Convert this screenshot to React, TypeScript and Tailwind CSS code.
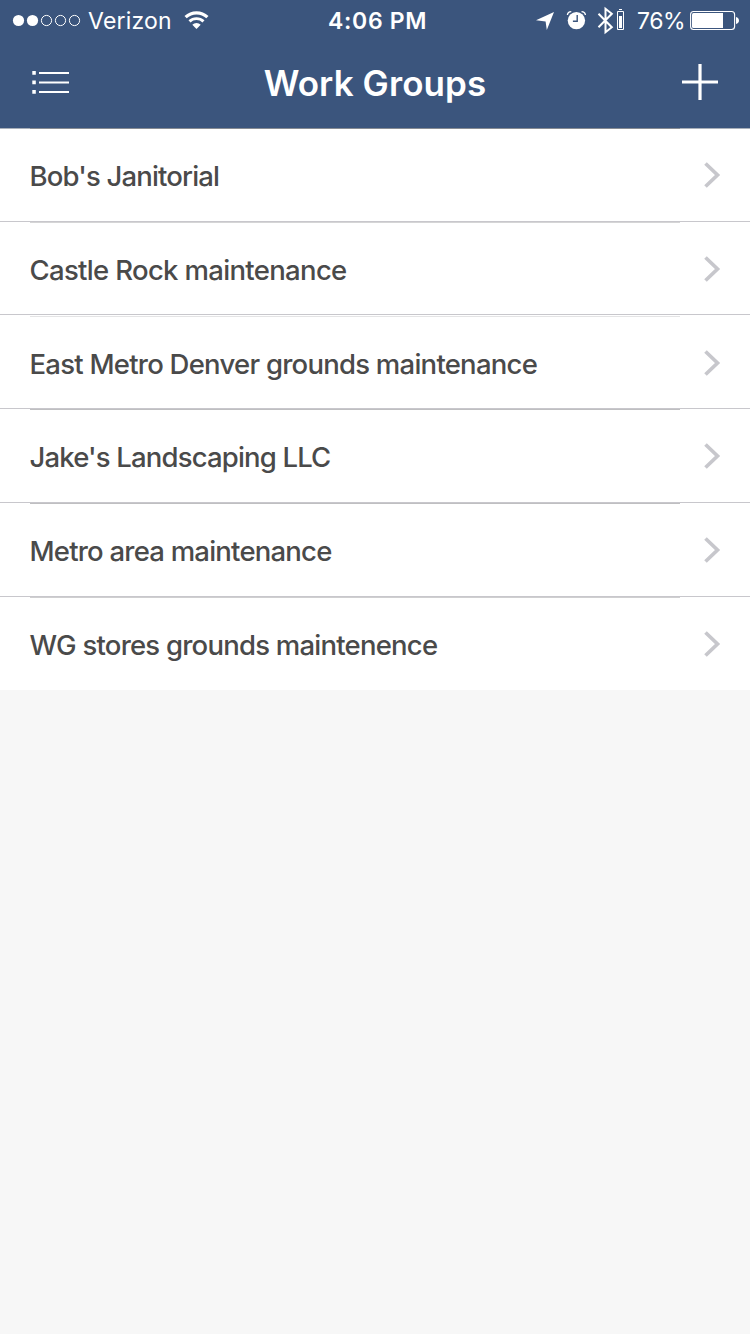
import clsx from "clsx";

const groups = [
  { name: "Bob's Janitorial", row: "h-[93px] pb-px", line: "bg-[#d5d5d6]", offset: "top-0", label: "tracking-[-0.83px]" },
  { name: "Castle Rock maintenance", row: "h-[93px] pt-px", line: "bg-[#d5d5d6]", offset: "top-0", label: "tracking-[-0.67px]" },
  { name: "East Metro Denver grounds maintenance", row: "h-[94px] pt-[3px]", line: "bg-[#e4e4e5]", offset: "top-px", label: "tracking-[-0.75px]" },
  { name: "Jake's Landscaping LLC", row: "h-[94px] pt-px", line: "bg-[#bfbfc1]", offset: "top-0", label: "tracking-[-0.83px]" },
  { name: "Metro area maintenance", row: "h-[94px] pt-px", line: "bg-[#bfbfc1]", offset: "top-0", label: "tracking-[-0.78px]" },
  { name: "WG stores grounds maintenence", row: "h-[93px] pt-px", line: "bg-[#cfcfd0]", offset: "top-0", label: "tracking-[-0.77px]" },
];

function SignalDots() {
  return (
    <svg width="70" height="15" viewBox="0 0 70 15" className="shrink-0">
      {[0, 1, 2, 3, 4].map((i) => (
        <circle
          key={i}
          cx={6.5 + i * 14}
          cy="7.5"
          r={i < 2 ? 5.6 : 5.1}
          fill={i < 2 ? "white" : "none"}
          stroke={i < 2 ? "none" : "white"}
        />
      ))}
    </svg>
  );
}

function WifiIcon() {
  return (
    <svg width="26" height="21" viewBox="0 0 26 21" fill="none" stroke="white" className="shrink-0">
      <path d="M1.6 7.2a15.9 15.9 0 0 1 21.8 0" strokeWidth="3.2" />
      <path d="M5.5 11.4a10.2 10.2 0 0 1 14 0" strokeWidth="2.9" />
      <path d="M12.5 19 8.3 14.8a6 6 0 0 1 8.4 0z" fill="white" stroke="none" />
    </svg>
  );
}

function LocationIcon() {
  return (
    <svg width="18" height="19" viewBox="0 0 18 19" fill="white" className="shrink-0">
      <path d="M18 1 10.8 19 9.6 10.4 0 9.2z" />
    </svg>
  );
}

function AlarmIcon() {
  return (
    <svg width="20" height="21" viewBox="0 0 20 21" fill="none" className="shrink-0">
      <circle cx="10.4" cy="10.6" r="8.7" fill="white" />
      <path d="M11.2 5v6.2H6.9" stroke="#3b557d" strokeWidth="1.4" />
      <path d="M1.4 5C1.6 3 3.200 1.700 5.300 1.600M19.400 5c-.2-2-1.800-3.300-3.900-3.400" stroke="white" strokeWidth="1.300" />
    </svg>
  );
}

function BluetoothIcon() {
  return (
    <svg width="27" height="29" viewBox="0 0 27 29" fill="none" stroke="white" className="shrink-0">
      <path d="m1.500 7.800 13.300 13.400-6.300 5V2.800l6.300 5L1.500 21.200" strokeWidth="2" />
      <path d="M20.500 5.500h6v18h-6zM22 3.500h3" strokeWidth="1" />
      <path d="M22 10h3v12h-3z" fill="white" stroke="none" />
    </svg>
  );
}

function BatteryIcon() {
  return (
    <svg width="50" height="21" viewBox="0 0 50 21" className="shrink-0">
      <rect x=".6" y="1.5" width="44" height="18" rx="3" fill="none" stroke="white" strokeWidth="1.1" />
      <path d="M3.5 3H33v15H3.5A1.5 1.5 0 0 1 2 16.5v-12A1.5 1.5 0 0 1 3.5 3z" fill="white" />
      <path d="M46 6.9c1.8.5 3 1.9 3 3.6s-1.2 3.1-3 3.6z" fill="white" />
    </svg>
  );
}

function StatusBar() {
  return (
    <div className="flex h-[41px] items-center text-[23px] leading-10 text-white">
      <div className="flex w-[328px] items-center pl-3">
        <SignalDots />
        <span className="mt-px ml-1.5 w-24 tracking-[0.2px]">Verizon</span>
        <WifiIcon />
      </div>
      <span className="mt-px w-[208px] font-semibold tracking-[0.7px]">4:06 PM</span>
      <LocationIcon />
      <div className="ml-3 flex">
        <AlarmIcon />
      </div>
      <div className="ml-[11px] flex">
        <BluetoothIcon />
      </div>
      <span className="mt-px ml-[13px] w-[53px] tracking-[-0.5px]">76%</span>
      <BatteryIcon />
    </div>
  );
}

function MenuIcon() {
  return (
    <svg width="38" height="24" viewBox="0 0 38 24" fill="white">
      <path d="M.3 1.1h3.5v3.7H.3zM.3 10.5h3.5v3.7H.3zM.3 20h3.5v3.7H.3z" />
      <path d="M7 2h30v2H7zM7 11.5h30v2H7zM7 21h30v2H7z" />
    </svg>
  );
}

function NavBar() {
  return (
    <div className="flex h-[87px] items-center justify-between px-8 pb-[5px] text-white">
      <button aria-label="Menu" className="w-[38px]">
        <MenuIcon />
      </button>
      <h1 className="mt-[2px] text-[35px] leading-[80px] font-semibold tracking-[0.1px]">Work Groups</h1>
      <button aria-label="Add group" className="flex w-[38px] justify-end">
        <svg width="38" height="38" viewBox="0 0 38 38" stroke="white" strokeWidth="3.2">
          <path d="M20 1v36M2 19h36" />
        </svg>
      </button>
    </div>
  );
}

function ChevronIcon() {
  return (
    <svg width="18" height="28" viewBox="0 0 18 28" fill="none" stroke="#c7c7cc" strokeWidth="3.7">
      <path d="m2.5 2.5 12 11.5-12 11.5" />
    </svg>
  );
}

export default function App() {
  return (
    <div className="flex h-[1334px] w-[750px] flex-col bg-[#f7f7f7] font-[Inter,'Liberation_Sans',sans-serif]">
      <header className="h-32 bg-[#3b557d]">
        <StatusBar />
        <NavBar />
      </header>

      {/* Groups */}
      <div className="h-px bg-[#a9b0ba] px-[30px]">
        <div className="h-px w-[650px] bg-[#868b93]" />
      </div>
      <ul>
        {groups.map((group, i) => (
          <li
            key={group.name}
            className={clsx(
              "relative flex items-center justify-between bg-white pr-[29px] pl-[29.5px]",
              group.row,
              i < groups.length - 1 && "border-b border-[#c8c7cc]",
            )}
          >
            {i > 0 && <div className={clsx("absolute left-[30px] h-px w-[650px]", group.offset, group.line)} />}
            <span className={clsx("mt-[2px] text-[27.5px] leading-10 font-medium text-[#4a4a4a]", group.label)}>
              {group.name}
            </span>
            <ChevronIcon />
          </li>
        ))}
      </ul>
    </div>
  );
}
